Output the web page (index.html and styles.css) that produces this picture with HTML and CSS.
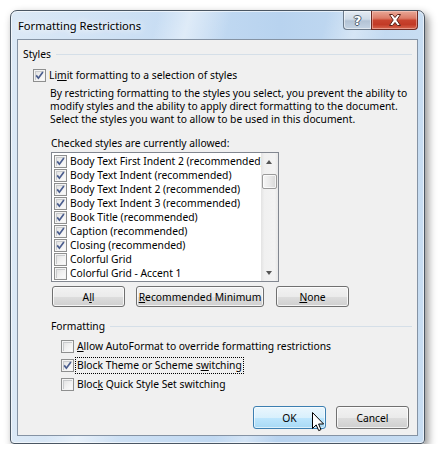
FILE: index.html
```html
<!DOCTYPE html>
<html>
<head>
<meta charset="utf-8">
<link rel="stylesheet" href="styles.css">
</head>
<body>
<div class="window">
  <div class="titlebar">
    <span class="title">Formatting Restrictions</span>
    <div class="capbtns">
      <div class="cap help">?</div>
      <div class="cap close">
        <svg width="14" height="12" viewBox="0 0 14 12"><polygon points="1.5,0.5 4.5,0.5 7,3.5 9.5,0.5 12.5,0.5 8.8,6 12.5,11.5 9.5,11.5 7,8.5 4.5,11.5 1.5,11.5 5.2,6" fill="#fff" stroke="#5b2218" stroke-width="1" stroke-linejoin="round"/></svg>
      </div>
    </div>
  </div>
  <div class="client">
    <div class="sect sect-styles"><span>Styles</span><i class="rule"></i></div>
    <div class="row limit"><span class="cb on"></span><span>Li<u>m</u>it formatting to a selection of styles</span></div>
    <p class="desc">By restricting formatting to the styles you select, you prevent the ability to<br>modify styles and the ability to apply direct formatting to the document.<br>Select the styles you want to allow to be used in this document.</p>
    <div class="caption">Checked styles are currently allowed:</div>
    <div class="listbox">
      <ul class="items">
        <li><span class="cb on"></span>Body Text First Indent 2 (recommended)</li>
        <li><span class="cb on"></span>Body Text Indent (recommended)</li>
        <li><span class="cb on"></span>Body Text Indent 2 (recommended)</li>
        <li><span class="cb on"></span>Body Text Indent 3 (recommended)</li>
        <li><span class="cb on"></span>Book Title (recommended)</li>
        <li><span class="cb on"></span>Caption (recommended)</li>
        <li><span class="cb on"></span>Closing (recommended)</li>
        <li><span class="cb"></span>Colorful Grid</li>
        <li><span class="cb"></span>Colorful Grid - Accent 1</li>
      </ul>
      <div class="vscroll">
        <div class="arrow up"></div>
        <div class="thumb"></div>
        <div class="arrow down"></div>
      </div>
    </div>
    <div class="btnrow">
      <button class="btn w73">A<u>l</u>l</button>
      <button class="btn w128"><u>R</u>ecommended Minimum</button>
      <button class="btn w73"><u>N</u>one</button>
    </div>
    <div class="sect sect-fmt"><span>Formatting</span><i class="rule"></i></div>
    <div class="opts">
      <div class="row"><span class="cb"></span><span class="lbl"><u>A</u>llow AutoFormat to override formatting restrictions</span></div>
      <div class="row"><span class="cb on"></span><span class="lbl focus">Block Theme or Scheme s<u>w</u>itching</span></div>
      <div class="row"><span class="cb"></span><span class="lbl">Bloc<u>k</u> Quick Style Set switching</span></div>
    </div>
    <div class="footer">
      <button class="btn w73 tall ok">OK
        <svg class="cursor" width="13" height="20" viewBox="0 0 13 20"><path d="M0.5,0.5 L0.5,16.5 L4.2,12.9 L6.7,18.6 L9,17.6 L6.6,12 L11.6,12 Z" fill="#fff" stroke="#000" stroke-width="1" stroke-linejoin="miter"/></svg>
      </button>
      <button class="btn w73 tall">Cancel</button>
    </div>
  </div>
</div>
</body>
</html>
```

FILE: styles.css
```css
html, body {
  margin: 0;
  padding: 0;
  background: #fff;
}
body {
  font-family: "Noto Sans", "Segoe UI", sans-serif;
  font-size: 10.3px;
  color: #000;
}
.window {
  position: relative;
  margin: 10px 0 0 10px;
  width: 415px;
  height: 434px;
  box-sizing: border-box;
  border: 1px solid #4a5663;
  border-radius: 7px 7px 4px 4px;
  padding: 0 6px 7px 6px;
  background:
    linear-gradient(105deg, rgba(255,255,255,0) 28%, rgba(255,255,255,.45) 34%, rgba(255,255,255,0) 42%, rgba(255,255,255,0) 60%, rgba(255,255,255,.35) 66%, rgba(255,255,255,0) 72%),
    linear-gradient(to right, #dce9f6 0%, #c6dcf3 40%, #b8d3ef 65%, #c8ddf2 100%);
  box-shadow: inset 0 0 0 1px rgba(255,255,255,.6), 3px 4px 9px rgba(0,0,0,.45);
  display: flex;
  flex-direction: column;
}
.titlebar {
  height: 28px;
  display: flex;
  justify-content: space-between;
  align-items: flex-start;
}
.title {
  padding: 7px 0 0 1px;
  line-height: 15px;
  font-size: 11.2px;
  text-shadow: 0 0 6px #fff, 0 0 10px rgba(255,255,255,.9);
}
.capbtns {
  display: flex;
}
.cap {
  height: 19px;
  box-sizing: border-box;
  border: 1px solid #6c7a8a;
  border-top: none;
  display: flex;
  align-items: center;
  justify-content: center;
}
.help {
  width: 28px;
  border-right: none;
  border-radius: 0 0 0 4px;
  background: linear-gradient(to bottom, #e4ebf3 0%, #cfdbe8 45%, #b3c3d5 55%, #c4d3e3 100%);
  box-shadow: inset 0 0 0 1px rgba(255,255,255,.5);
  color: #fff;
  font-weight: bold;
  font-size: 13px;
  font-family: "DejaVu Sans", sans-serif;
  text-shadow: -1px 0 #4e5d6e, 1px 0 #4e5d6e, 0 -1px #4e5d6e, 0 1px #4e5d6e;
}
.close {
  width: 47px;
  border-color: #6e2a22;
  border-radius: 0 0 4px 0;
  background: linear-gradient(to bottom, #e9a897 0%, #dc7c68 40%, #c8432e 52%, #c23a26 75%, #d7664f 100%);
  box-shadow: inset 0 0 0 1px rgba(255,220,210,.45);
}
.client {
  width: 401px;
  height: 397px;
  box-sizing: border-box;
  border: 1px solid #8593a4;
  background: #f0f0f0;
  display: flex;
  flex-direction: column;
}
.sect {
  display: flex;
  align-items: center;
  line-height: 15px;
  height: 15px;
}
.sect .rule {
  flex: 1;
  height: 1px;
  background: #d5dfe8;
  margin: 0 5px 0 5px;
}
.sect-styles {
  margin-top: 7px;
  padding-left: 5px;
}
.sect-fmt {
  margin-top: 12px;
  padding-left: 33px;
}
.row {
  display: flex;
  align-items: center;
}
.limit {
  margin-top: 6px;
  padding-left: 15px;
  height: 15px;
  line-height: 15px;
}
.limit .cb {
  margin-right: 3px;
}
.desc {
  margin: 4px 0 0 0;
  padding-left: 32px;
  line-height: 13px;
}
.caption {
  margin-top: 10px;
  padding-left: 33px;
  line-height: 15px;
}
.cb {
  display: inline-block;
  flex: none;
  width: 13px;
  height: 13px;
  box-sizing: border-box;
  border: 1px solid #8e8f8f;
  background: linear-gradient(135deg, #dcdcdc 0%, #f0f0f0 50%, #fdfdfd 100%);
  box-shadow: inset 0 0 0 1px #f4f4f4, inset 1px 1px 0 1px #c9cbcd;
  position: relative;
}
.cb.on::after {
  content: "";
  position: absolute;
  left: 1px;
  top: 1px;
  width: 9px;
  height: 9px;
  background: url("data:image/svg+xml;utf8,<svg xmlns='http://www.w3.org/2000/svg' width='9' height='9' viewBox='0 0 9 9'><path d='M1.2 4.4 L3.4 7.2 L7.9 1' fill='none' stroke='%234a5d8e' stroke-width='1.7'/></svg>") no-repeat;
}
.listbox {
  margin: 1px 0 0 33px;
  width: 228px;
  height: 130px;
  box-sizing: border-box;
  border: 1px solid #828790;
  background: #fff;
  display: flex;
}
.items {
  list-style: none;
  margin: 0;
  padding: 1px 0 0 2px;
  flex: 1;
  overflow: hidden;
  white-space: nowrap;
}
.items li {
  height: 14px;
  line-height: 14px;
  display: flex;
  align-items: center;
}
.items .cb {
  margin-right: 3px;
}
.vscroll {
  width: 17px;
  flex: none;
  background: linear-gradient(to right, #e3e3e3 0%, #f0f0f0 20%, #f3f3f3 80%, #e8e8e8 100%);
  display: flex;
  flex-direction: column;
  align-items: center;
}
.arrow {
  height: 17px;
  width: 17px;
  position: relative;
}
.arrow::after {
  content: "";
  position: absolute;
  left: 5px;
  width: 0;
  height: 0;
  border-left: 3.5px solid transparent;
  border-right: 3.5px solid transparent;
}
.arrow.up::after {
  top: 7px;
  border-bottom: 4px solid #555;
}
.arrow.down::after {
  top: 7px;
  border-top: 4px solid #555;
}
.arrow.down {
  margin-top: auto;
}
.thumb {
  margin-top: 4px;
  width: 15px;
  height: 15px;
  box-sizing: border-box;
  border: 1px solid #9a9a9a;
  border-radius: 2px;
  background: linear-gradient(to right, #f6f6f6 0%, #e9e9e9 50%, #d8d8d8 100%);
  box-shadow: inset 0 0 0 1px rgba(255,255,255,.7);
}
.btnrow {
  margin-top: 4px;
  padding-left: 34px;
  display: flex;
  gap: 11px;
}
.btnrow .btn + .btn + .btn {
  margin-left: 1px;
}
.btn {
  font-family: inherit;
  font-size: 10.3px;
  color: #000;
  height: 21px;
  padding: 0;
  box-sizing: border-box;
  border: 1px solid #707070;
  border-radius: 3px;
  background: linear-gradient(to bottom, #f2f2f2 0%, #ebebeb 50%, #dddddd 51%, #cfcfcf 100%);
  box-shadow: inset 0 0 0 1px rgba(255,255,255,.75);
  line-height: 18px;
  text-align: center;
  position: relative;
  white-space: nowrap;
}
.w73 { width: 73px; }
.w128 { width: 128px; }
.btn.tall { height: 23px; line-height: 20px; }
.btn.ok {
  border-color: #3c7fb1;
  background: linear-gradient(to bottom, #eaf6fd 0%, #d9f0fc 50%, #bee6fd 51%, #a7d9f5 100%);
  box-shadow: inset 0 0 0 1px rgba(255,255,255,.6);
}
.cursor {
  position: absolute;
  left: 58px;
  top: 5px;
}
.opts {
  margin-top: 3px;
  padding-left: 43px;
}
.opts .row {
  height: 19px;
}
.opts .lbl {
  margin-left: 2px;
  padding: 0 1px;
  line-height: 15px;
}
.focus {
  outline: 1px dotted #000;
  outline-offset: 0;
}
.footer {
  margin-top: auto;
  padding: 0 8px 6px 0;
  display: flex;
  justify-content: flex-end;
  gap: 10px;
}
u {
  text-decoration: underline;
  text-underline-offset: 1px;
}
```
